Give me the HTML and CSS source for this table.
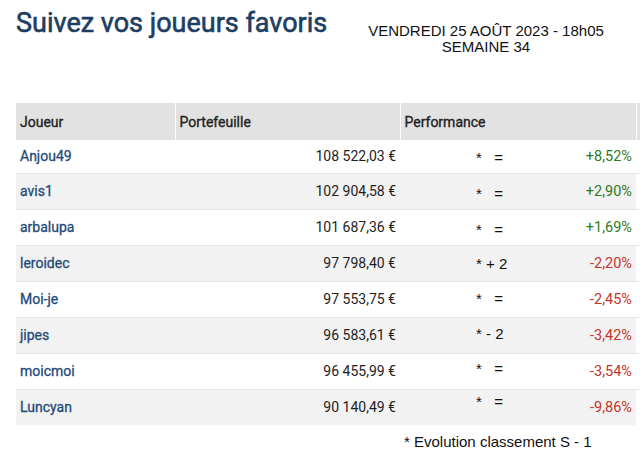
FILE: index.html
```html
<!DOCTYPE html>
<html lang="fr">
<head>
<meta charset="utf-8">
<title>Suivez vos joueurs favoris</title>
<link rel="stylesheet" href="styles.css">
</head>
<body>
<div class="page">
  <header class="top">
    <h1 class="title">Suivez vos joueurs favoris</h1>
    <div class="date">VENDREDI 25 AOÛT 2023 - 18h05<br>SEMAINE 34</div>
  </header>
  <table class="players">
    <thead>
      <tr>
        <th class="c-name">Joueur</th>
        <th class="c-wallet">Portefeuille</th>
        <th class="c-perf">Performance</th>
        <th class="c-extra"></th>
      </tr>
    </thead>
    <tbody>
      <tr>
        <td class="name">Anjou49</td>
        <td class="wallet">108 522,03 €</td>
        <td class="perf"><div class="perf-in"><span class="evo d1">*&nbsp;&nbsp; =</span><span class="pct up">+8,52%</span></div></td>
        <td></td>
      </tr>
      <tr>
        <td class="name">avis1</td>
        <td class="wallet">102 904,58 €</td>
        <td class="perf"><div class="perf-in"><span class="evo d2">*&nbsp;&nbsp; =</span><span class="pct up">+2,90%</span></div></td>
        <td></td>
      </tr>
      <tr>
        <td class="name">arbalupa</td>
        <td class="wallet">101 687,36 €</td>
        <td class="perf"><div class="perf-in"><span class="evo d2">*&nbsp;&nbsp; =</span><span class="pct up">+1,69%</span></div></td>
        <td></td>
      </tr>
      <tr>
        <td class="name">leroidec</td>
        <td class="wallet">97 798,40 €</td>
        <td class="perf"><div class="perf-in"><span class="evo">* + 2</span><span class="pct down">-2,20%</span></div></td>
        <td></td>
      </tr>
      <tr>
        <td class="name">Moi-je</td>
        <td class="wallet">97 553,75 €</td>
        <td class="perf"><div class="perf-in"><span class="evo u1">*&nbsp;&nbsp; =</span><span class="pct down">-2,45%</span></div></td>
        <td></td>
      </tr>
      <tr>
        <td class="name">jipes</td>
        <td class="wallet">96 583,61 €</td>
        <td class="perf"><div class="perf-in"><span class="evo u2">* - 2</span><span class="pct down">-3,42%</span></div></td>
        <td></td>
      </tr>
      <tr>
        <td class="name">moicmoi</td>
        <td class="wallet">96 455,99 €</td>
        <td class="perf"><div class="perf-in"><span class="evo u3">*&nbsp;&nbsp; =</span><span class="pct down">-3,54%</span></div></td>
        <td></td>
      </tr>
      <tr>
        <td class="name">Luncyan</td>
        <td class="wallet">90 140,49 €</td>
        <td class="perf"><div class="perf-in"><span class="evo u6">*&nbsp;&nbsp; =</span><span class="pct down">-9,86%</span></div></td>
        <td></td>
      </tr>
    </tbody>
  </table>
  <p class="note">* Evolution classement S - 1</p>
  <p class="more">Les portefeuilles sont actualisés chaque soir après la clôture des marchés boursiers européens.</p>
</div>
</body>
</html>
```

FILE: styles.css
```css
html, body {
  margin: 0;
  padding: 0;
  background: #ffffff;
  overflow: hidden;
}
.page {
  width: 640px;
  height: 462px;
  overflow: hidden;
  padding: 0 0 0 16px;
  box-sizing: border-box;
}
.top {
  display: flex;
  align-items: flex-start;
  height: 103px;
}
.title {
  margin: 7px 0 0 0;
  font-family: Roboto, "Liberation Sans", sans-serif;
  font-weight: 400;
  -webkit-text-stroke: 0.6px #1d3e63;
  font-size: 27px;
  line-height: 32px;
  color: #1d3e63;
  white-space: nowrap;
  width: 352px;
}
.date {
  margin-top: 23px;
  width: 236px;
  font-family: "Liberation Sans", Arial, sans-serif;
  font-size: 15px;
  line-height: 16px;
  color: #111;
  text-align: center;
  white-space: nowrap;
}
.players {
  border-collapse: collapse;
  table-layout: fixed;
  width: 700px;
  font-family: Roboto, "Liberation Sans", sans-serif;
  font-size: 14px;
  color: #1e1e1e;
}
.players th {
  background: #e2e2e2;
  height: 37px;
  padding: 0 0 0 4px;
  text-align: left;
  font-weight: 400;
  -webkit-text-stroke: 0.35px #222;
  color: #222;
  border-left: 1px solid #ffffff;
  box-sizing: border-box;
  vertical-align: middle;
}
.players th:first-child {
  border-left: none;
}
.c-name { width: 159px; }
.c-wallet { width: 225px; }
.c-perf { width: 236px; }
.c-extra { width: 80px; }
.players td {
  height: 36px;
  padding: 0 4px;
  border-top: 1px solid #e6e6e6;
  vertical-align: middle;
  box-sizing: border-box;
  white-space: nowrap;
}
.players tbody tr:first-child td {
  border-top: none;
  height: 33px;
}
.players tbody tr:nth-child(even) td {
  background: #f2f2f2;
}
.players tbody tr td:last-child {
  background: transparent !important;
}
.name {
  color: #1f4a78;
  font-weight: 400;
  -webkit-text-stroke: 0.3px #1f4a78;
}
.wallet {
  text-align: right;
  padding-right: 4px !important;
}
.perf-in {
  display: flex;
  align-items: center;
}
.evo {
  width: 170px;
  padding-left: 72px;
  box-sizing: border-box;
  font-family: "Liberation Sans", Arial, sans-serif;
  font-size: 15px;
  color: #111;
  position: relative;
}
.evo.d1 { top: 1px; }
.evo.d2 { top: 2px; }
.evo.u1 { top: -1px; }
.evo.u2 { top: -2px; }
.evo.u3 { top: -3px; }
.evo.u6 { top: -6px; }
.pct {
  flex: 1;
  text-align: right;
  font-size: 14.5px;
}
.pct.up { color: #2f7a25; }
.pct.down { color: #c4352b; }
.note {
  margin: 8px 0 0 388px;
  font-family: "Liberation Sans", Arial, sans-serif;
  font-size: 15px;
  line-height: 18px;
  color: #111;
  white-space: nowrap;
}
.more {
  margin: 11px 0 0 -8px;
  font-family: "Liberation Sans", Arial, sans-serif;
  font-size: 15px;
  line-height: 18px;
  color: #111;
  white-space: nowrap;
}
```
